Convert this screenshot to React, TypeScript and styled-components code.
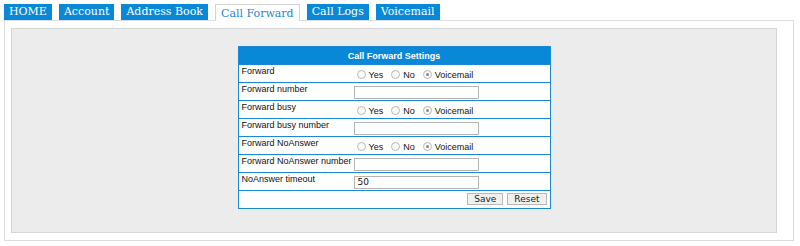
import React from "react";
import styled, { createGlobalStyle } from "styled-components";

const GlobalStyle = createGlobalStyle`
  body {
    margin: 0;
    background: #ffffff;
    font-family: "Liberation Sans", Arial, sans-serif;
  }
`;

const Page = styled.div`
  padding: 4px 6px 0 4px;
  width: 800px;
  box-sizing: border-box;
`;

const TabBar = styled.div`
  display: flex;
  gap: 7px;
  align-items: flex-end;
  height: 16px;
`;

interface TabProps {
  active?: boolean;
}

const Tab = styled.div<TabProps>`
  height: ${(p) => (p.active ? "17px" : "16px")};
  padding: 0 5px;
  box-sizing: border-box;
  font-family: "DejaVu Serif", serif;
  font-size: 11px;
  line-height: ${(p) => (p.active ? "17px" : "16px")};
  white-space: nowrap;
  color: ${(p) => (p.active ? "#1a87d2" : "#ffffff")};
  background: ${(p) => (p.active ? "#ffffff" : "#0a88d8")};
  border: ${(p) => (p.active ? "1px solid #d4d4d4" : "none")};
  border-bottom: none;
  position: relative;
  z-index: 1;
  margin-bottom: ${(p) => (p.active ? "-1px" : "0")};
`;

const Outer = styled.div`
  border: 1px solid #dcdcdc;
  background: #ffffff;
  height: 221px;
  box-sizing: border-box;
  padding: 7px 16px 7px 6px;
`;

const Inner = styled.div`
  height: 100%;
  box-sizing: border-box;
  background: #ececec;
  border: 1px solid #d6d6d6;
  padding-top: 17px;
  display: flex;
  justify-content: center;
  align-items: flex-start;
`;

const Table = styled.table`
  width: 313px;
  border-collapse: collapse;
  background: #ffffff;
  border: 1px solid #1a88d4;
  font-size: 9px;
  color: #111;
`;

const HeadCell = styled.th`
  background: #0a88d8;
  color: #ffffff;
  font-weight: bold;
  font-size: 9px;
  height: 17px;
  padding: 0;
  text-align: center;
`;

const Row = styled.tr`
  border-top: 1px solid #1a88d4;
  height: 18px;
`;

const LabelCell = styled.td`
  width: 110px;
  padding: 0 0 5px 3px;
  vertical-align: middle;
  white-space: nowrap;
`;

const FieldCell = styled.td`
  padding: 0 2px 0 2px;
  vertical-align: middle;
`;

const RadioGroup = styled.div`
  display: flex;
  align-items: center;
  padding-left: 3px;
  padding-top: 2px;
  gap: 8px;
`;

const RadioItem = styled.label`
  display: flex;
  align-items: center;
  gap: 3px;
  font-size: 9px;
`;

interface DotProps {
  checked?: boolean;
}

const Dot = styled.span<DotProps>`
  width: 7px;
  height: 7px;
  border-radius: 50%;
  border: 1px solid #b8b8b8;
  background: #fafafa;
  display: inline-flex;
  align-items: center;
  justify-content: center;
  &::after {
    content: "";
    width: 3px;
    height: 3px;
    border-radius: 50%;
    background: ${(p) => (p.checked ? "#8a8a8a" : "transparent")};
  }
`;

const TextInput = styled.div`
  width: 125px;
  height: 13px;
  box-sizing: border-box;
  border: 1px solid #b4b4b4;
  font-family: "DejaVu Sans", sans-serif;
  font-size: 9px;
  line-height: 11px;
  padding-left: 3px;
  margin-top: 1px;
`;

const ButtonCell = styled.td`
  text-align: right;
  padding: 2px 3px 3px 0;
`;

const Button = styled.span`
  display: inline-block;
  height: 12px;
  line-height: 10px;
  box-sizing: border-box;
  padding: 0 6px;
  margin-left: 4px;
  font-family: "DejaVu Sans", sans-serif;
  font-size: 9px;
  border: 1px solid #b8b8b8;
  background: #f0f0f0;
  color: #222;
`;

type Field =
  | { label: string; kind: "radio" }
  | { label: string; kind: "text"; value?: string };

const fields: Field[] = [
  { label: "Forward", kind: "radio" },
  { label: "Forward number", kind: "text" },
  { label: "Forward busy", kind: "radio" },
  { label: "Forward busy number", kind: "text" },
  { label: "Forward NoAnswer", kind: "radio" },
  { label: "Forward NoAnswer number", kind: "text" },
  { label: "NoAnswer timeout", kind: "text", value: "50" },
];

const tabs = ["HOME", "Account", "Address Book", "Call Forward", "Call Logs", "Voicemail"];

function Radios() {
  return (
    <RadioGroup>
      <RadioItem><Dot />Yes</RadioItem>
      <RadioItem><Dot />No</RadioItem>
      <RadioItem><Dot checked />Voicemail</RadioItem>
    </RadioGroup>
  );
}

export default function App() {
  return (
    <Page>
      <GlobalStyle />
      <TabBar>
        {tabs.map((t) => (
          <Tab key={t} active={t === "Call Forward"}>{t}</Tab>
        ))}
      </TabBar>
      <Outer>
        <Inner>
          <Table>
            <thead>
              <tr>
                <HeadCell colSpan={2}>Call Forward Settings</HeadCell>
              </tr>
            </thead>
            <tbody>
              {fields.map((f) => (
                <Row key={f.label}>
                  <LabelCell>{f.label}</LabelCell>
                  <FieldCell>
                    {f.kind === "radio" ? (
                      <Radios />
                    ) : (
                      <TextInput>{f.value}</TextInput>
                    )}
                  </FieldCell>
                </Row>
              ))}
              <Row>
                <ButtonCell colSpan={2}>
                  <Button>Save</Button>
                  <Button>Reset</Button>
                </ButtonCell>
              </Row>
            </tbody>
          </Table>
        </Inner>
      </Outer>
    </Page>
  );
}
